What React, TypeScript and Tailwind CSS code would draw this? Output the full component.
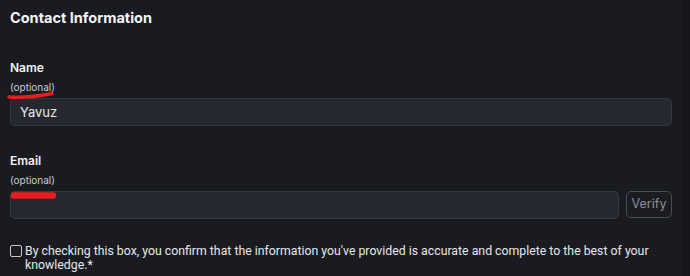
import React from "react";

const Mark = ({ curved }: { curved?: boolean }) =>
  curved ? (
    <svg width="50" height="9" viewBox="0 0 50 9" className="absolute left-[-4px] top-[11px] z-10">
      <path d="M3 6 C 15 7, 30 5.5, 46 2.5" stroke="#e51f1f" strokeWidth="3.4" strokeLinecap="round" fill="none" />
    </svg>
  ) : (
    <svg width="48" height="9" viewBox="0 0 48 9" className="absolute left-[0px] top-[18px] z-10">
      <path d="M4 4.5 L 43 4.5" stroke="#e51f1f" strokeWidth="6.5" strokeLinecap="round" fill="none" />
    </svg>
  );

const Field = ({
  label,
  value,
  curved,
  verify,
}: {
  label: string;
  value: string;
  curved?: boolean;
  verify?: boolean;
}) => (
  <div className="flex flex-col">
    <label className="text-[12px] font-semibold leading-[16px] text-[#f2f3f5]">{label}</label>
    <div className="relative mt-[4px] h-[14px] text-[10px] leading-[14px] text-[#c9cbd1]">
      (optional)
      <Mark curved={curved} />
    </div>
    <div className="mt-[4px] flex gap-[7px]">
      <div className="h-[28px] flex-1 rounded-[5px] border border-[#363840] bg-[#262830] px-[9px] text-[13px] leading-[26px] text-[#e8e9ec]">
        {value}
      </div>
      {verify && (
        <button className="h-[27px] w-[46px] rounded-[5px] border border-[#4a4c53] bg-[#1b1c21] text-[12.5px] text-[#8c8e94]">
          Verify
        </button>
      )}
    </div>
  </div>
);

export default function App() {
  return (
    <div className="flex h-[276px] w-[690px] bg-[#1a1b20] font-['Inter',sans-serif]">
      <div className="flex w-[683px] flex-col pl-[10px] pr-[11px] pt-[8px]">
        <h2 className="text-[14.5px] font-bold leading-[20px] text-[#f4f5f7]">Contact Information</h2>
        <div className="mt-[32px]">
          <Field label="Name" value="Yavuz" curved />
        </div>
        <div className="mt-[27px]">
          <Field label="Email" value="" verify />
        </div>
        <div className="mt-[25px] flex items-start gap-[3px]">
          <span className="mt-[1px] h-[12px] w-[12px] shrink-0 rounded-[2px] border border-[#c8cad0]" />
          <p className="font-['Roboto',sans-serif] text-[12.3px] leading-[14px] text-[#e6e7ea]">
            By checking this box, you confirm that the information you've provided is accurate and complete to the best of your knowledge.*
          </p>
        </div>
      </div>
      <div className="flex-1 bg-[#16171b]" />
    </div>
  );
}
